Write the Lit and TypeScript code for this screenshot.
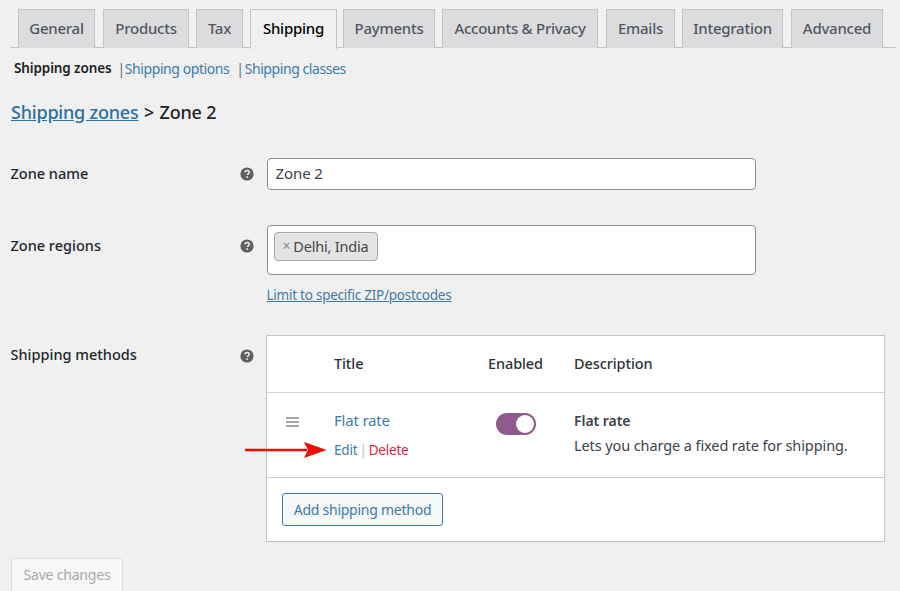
import { LitElement, html, css } from "lit";
import { customElement } from "lit/decorators.js";

const TABS: [string, number, number][] = [
  ["General", 77, 8],
  ["Products", 86, 7],
  ["Tax", 47, 7],
  ["Shipping", 87, 6],
  ["Payments", 92, 7],
  ["Accounts & Privacy", 156, 8],
  ["Emails", 69, 7],
  ["Integration", 101, 8],
  ["Advanced", 92, 0],
];

const helpIcon = html`<svg class="help" viewBox="0 0 14 14" width="14" height="14">
  <circle cx="7" cy="7" r="6.6" fill="#5f5f5f"></circle>
  <path d="M4.9 5.4c.1-1.3 1-2 2.2-2 1.2 0 2.1.7 2.1 1.8 0 .9-.5 1.3-1.1 1.7-.5.3-.7.6-.7 1.2" fill="none" stroke="#f0f0f1" stroke-width="1.5"></path>
  <rect x="6.3" y="9.2" width="1.6" height="1.6" fill="#f0f0f1"></rect>
</svg>`;

@customElement("app-root")
export class AppRoot extends LitElement {
  static styles = css`
    :host {
      display: block;
      height: 591px;
      overflow: hidden;
      background: #f0f0f1;
      color: #2c3338;
      font-family: "Noto Sans", "Open Sans", sans-serif;
      font-size: 14.5px;
      position: relative;
    }
    .tabs {
      display: flex;
      margin: 0 4px 0 10px;
      padding: 9px 0 0 8px;
      height: 48px;
      box-sizing: border-box;
      border-bottom: 1px solid #c3c4c7;
    }
    .tab {
      flex: none;
      box-sizing: border-box;
      height: 39px;
      padding-bottom: 2px;
      display: flex;
      align-items: center;
      justify-content: center;
      background: #dcdcde;
      border: 1px solid #c3c4c7;
      border-bottom: none;
      color: #50575e;
      font-size: 15px;
      font-weight: 500;
      letter-spacing: -0.25px;
      white-space: nowrap;
    }
    .tab.active {
      background: #f0f0f1;
      color: #000;
      height: 40px;
      padding-bottom: 3px;
    }
    .subnav {
      display: flex;
      align-items: center;
      height: 20px;
      margin: 10px 0 0 14px;
      font-size: 14px;
      color: #3f7ba7;
      letter-spacing: -0.42px;
      white-space: nowrap;
    }
    .subnav b {
      color: #1d2327;
      font-weight: 600;
      font-size: 13.5px;
      letter-spacing: -0.12px;
    }
    .sep {
      color: #646970;
      margin: 0 0 0 6px;
    }
    .sep.b {
      margin: 0 1px 0 7px;
    }
    h2 {
      margin: 20px 0 0 11px;
      height: 28px;
      line-height: 28px;
      font-size: 18px;
      font-weight: 500;
      color: #1d2327;
      letter-spacing: -0.2px;
      white-space: nowrap;
    }
    h2 a {
      color: #2a6fa5;
      text-decoration: underline;
    }
    h2 .gt {
      margin: 0 1px;
    }
    .row {
      display: grid;
      grid-template-columns: 230px 26px 1fr;
      margin-left: 10.5px;
      margin-right: 15px;
    }
    .row > label {
      font-weight: 500;
      font-size: 14.5px;
      letter-spacing: 0;
      color: #23282d;
      line-height: 20px;
    }
    .help {
      display: block;
      margin-left: -0.5px;
    }
    .row.name {
      margin-top: 32px;
      height: 32px;
      align-items: center;
    }
    .row.name > label {
      padding-bottom: 2px;
    }
    .row.regions {
      margin-top: 35px;
    }
    .row.regions > label {
      margin-top: 10px;
    }
    .row.regions .help {
      margin-top: 14px;
    }
    .row.methods {
      margin-top: 0;
    }
    .row.methods > label {
      margin-top: 9px;
    }
    .row.methods .help {
      margin-top: 14px;
    }
    .input {
      box-sizing: border-box;
      width: 489px;
      height: 32px;
      background: #fff;
      border: 1px solid #8c8f94;
      border-radius: 4px;
      display: flex;
      align-items: center;
      padding: 0 0 2px 8px;
      color: #3c434a;
      font-size: 15px;
      letter-spacing: -0.1px;
    }
    .multi {
      box-sizing: border-box;
      width: 489px;
      height: 50px;
      background: #fff;
      border: 1px solid #8c8f94;
      border-radius: 4px;
      padding: 6px;
    }
    .chip {
      box-sizing: border-box;
      display: inline-flex;
      align-items: center;
      width: 104px;
      height: 29px;
      background: #e4e4e4;
      border: 1px solid #aaa;
      border-radius: 4px;
      padding: 0 0 2px 8px;
      font-size: 14.5px;
      letter-spacing: -0.2px;
      color: #444;
      white-space: nowrap;
    }
    .chip i {
      font-style: normal;
      color: #888;
      font-size: 14px;
      margin-right: 3px;
    }
    .limit {
      display: block;
      margin: 11px 0 0 0;
      height: 18px;
      line-height: 18px;
      font-size: 13.5px;
      letter-spacing: -0.24px;
      color: #3f7ba7;
      text-decoration: underline;
    }
    .rule {
      height: 31px;
    }
    .table {
      box-sizing: border-box;
      width: 618.5px;
      height: 207px;
      background: #fff;
      border: 1px solid #c3c4c7;
      margin-left: -0.5px;
    }
    .thead,
    .tbody {
      display: grid;
      grid-template-columns: 67px 154px 86px 1fr;
    }
    .thead {
      box-sizing: content-box;
      height: 54px;
      padding-bottom: 2px;
      align-items: center;
      border-bottom: 1px solid #d5d5d7;
      font-weight: 500;
      color: #2c3338;
      letter-spacing: -0.1px;
    }
    .tbody {
      height: 85px;
      box-sizing: border-box;
      border-bottom: 1px solid #ccc;
    }
    .handle {
      display: block;
      margin: 24px 0 0 19px;
    }
    .flat {
      color: #3f7ba7;
      font-size: 15px;
      letter-spacing: -0.2px;
      line-height: 20px;
      margin-top: 17px;
    }
    .actions {
      font-size: 13.5px;
      line-height: 18px;
      margin-top: 11px;
      letter-spacing: -0.2px;
      color: #3f7ba7;
      white-space: nowrap;
    }
    .actions .bar {
      color: #b8c4cc;
      margin: 0 2px;
    }
    .actions .del {
      color: #e0243a;
    }
    .toggle {
      box-sizing: border-box;
      width: 40px;
      height: 22px;
      margin: 20px 0 0 8px;
      border-radius: 11px;
      background: #8f5a8e;
      display: flex;
      justify-content: flex-end;
      align-items: center;
      padding-right: 2px;
    }
    .toggle span {
      width: 18px;
      height: 18px;
      border-radius: 50%;
      background: #fff;
    }
    .desc {
      margin-top: 15px;
      font-size: 14.5px;
      line-height: 25px;
      letter-spacing: -0.1px;
      color: #3c434a;
      white-space: nowrap;
    }
    .desc b {
      display: block;
      font-weight: 600;
      font-size: 14px;
      letter-spacing: -0.05px;
    }
    .tfoot {
      padding: 15px 0 0 15px;
    }
    .add {
      box-sizing: border-box;
      width: 161px;
      height: 33px;
      display: flex;
      align-items: center;
      justify-content: center;
      background: #f6f7f7;
      border: 1px solid #3f7ba7;
      border-radius: 3px;
      color: #3f7ba7;
      font-size: 14px;
      letter-spacing: -0.25px;
      white-space: nowrap;
    }
    .save {
      box-sizing: border-box;
      width: 112px;
      height: 38px;
      margin: 16px 0 0 11px;
      padding-top: 6px;
      line-height: 20px;
      text-align: center;
      background: #f6f7f7;
      border: 1px solid #dcdcde;
      border-radius: 3px;
      color: #a7aaad;
      font-size: 14px;
      letter-spacing: -0.2px;
    }
    .arrow {
      position: absolute;
      left: 244px;
      top: 440px;
    }
  `;

  render() {
    return html`
      <nav class="tabs">
        ${TABS.map(
          ([t, w, gap]) => html`<div
            class="tab ${t === "Shipping" ? "active" : ""}"
            style="width:${w}px;margin-right:${gap}px"
          >
            ${t}
          </div>`
        )}
      </nav>
      <div class="subnav">
        <b>Shipping zones</b><span class="sep">|</span>Shipping options<span class="sep b">|</span>Shipping classes
      </div>
      <h2><a>Shipping zones</a> <span class="gt">&gt;</span> Zone 2</h2>
      <div class="row name">
        <label>Zone name</label>${helpIcon}
        <div class="input">Zone 2</div>
      </div>
      <div class="row regions">
        <label>Zone regions</label>${helpIcon}
        <div>
          <div class="multi"><span class="chip"><i>×</i>Delhi, India</span></div>
          <a class="limit">Limit to specific ZIP/postcodes</a>
        </div>
      </div>
      <div class="rule"></div>
      <div class="row methods">
        <label>Shipping methods</label>${helpIcon}
        <div class="table">
          <div class="thead">
            <span></span><span>Title</span><span>Enabled</span><span>Description</span>
          </div>
          <div class="tbody">
            <svg class="handle" width="14" height="10" viewBox="0 0 14 10">
              <path d="M0 1h13M0 5h13M0 9h13" stroke="#8a8a8a" stroke-width="1.6"></path>
            </svg>
            <div>
              <div class="flat">Flat rate</div>
              <div class="actions">Edit<span class="bar">|</span><span class="del">Delete</span></div>
            </div>
            <div><div class="toggle"><span></span></div></div>
            <div class="desc"><b>Flat rate</b>Lets you charge a fixed rate for shipping.</div>
          </div>
          <div class="tfoot"><div class="add">Add shipping method</div></div>
        </div>
      </div>
      <div class="save">Save changes</div>
      <svg class="arrow" width="84" height="20" viewBox="0 0 84 20">
        <path d="M1 8.8h62v2.4H1z" fill="#ee0a0a"></path>
        <path d="M60 2l22.5 8L60 18l4-8z" fill="#ee0a0a"></path>
      </svg>
    `;
  }
}
